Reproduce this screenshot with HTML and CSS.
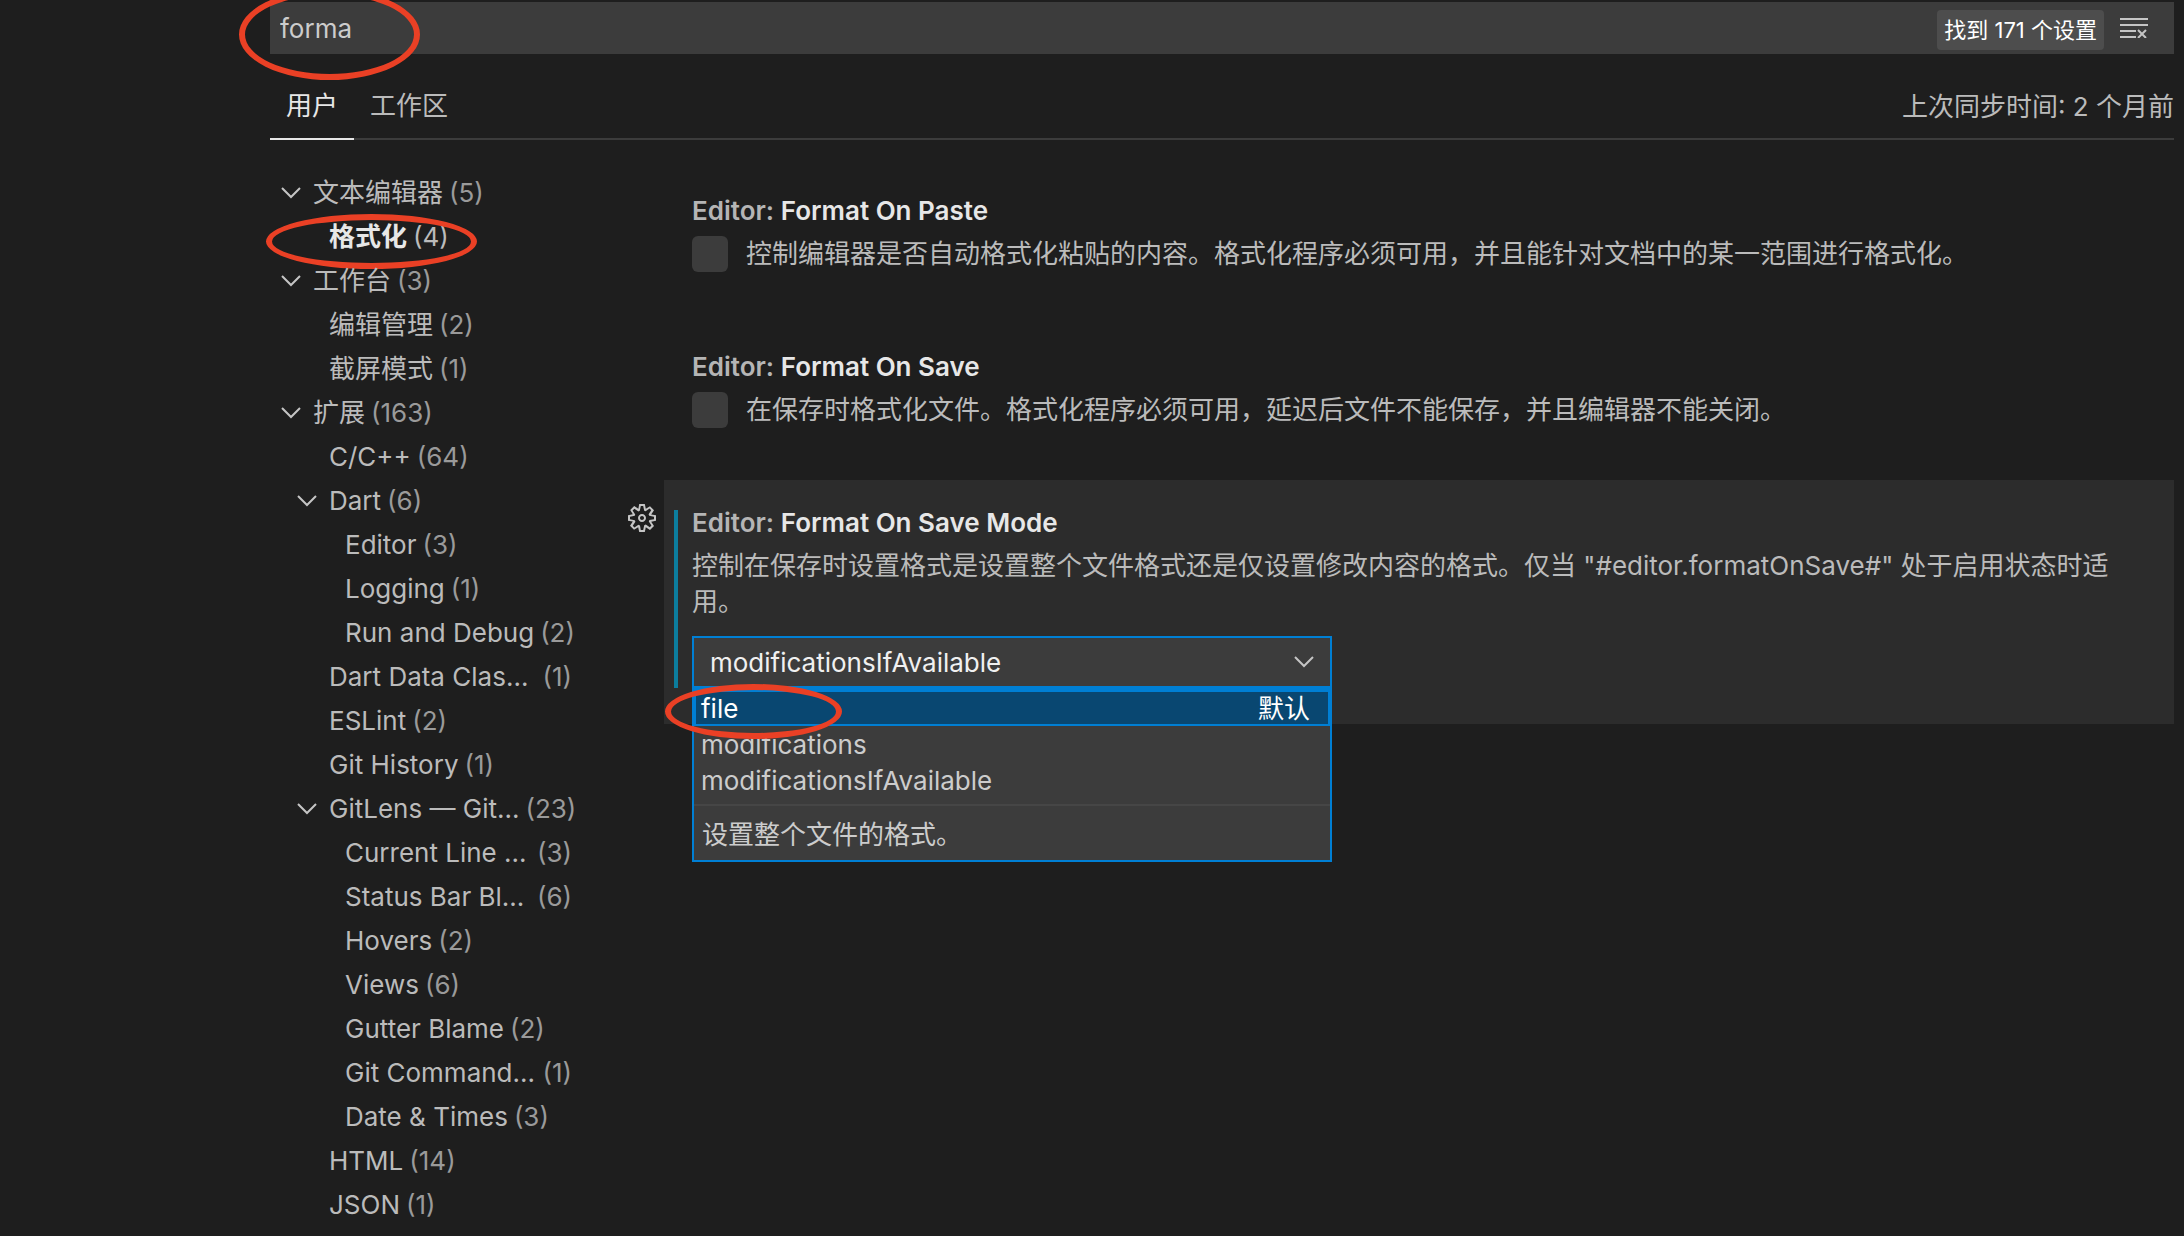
FILE: index.html
```html
<!DOCTYPE html>
<html lang="zh-CN">
<head>
<meta charset="utf-8">
<title>设置</title>
<link rel="stylesheet" href="styles.css">
</head>
<body>
<svg class="sprite" aria-hidden="true">
  <symbol id="chevron" viewBox="0 0 20 12"><path d="M1 1l9 9 9-9" fill="none" stroke="currentColor" stroke-width="2"/></symbol>
</svg>
<main class="settings">
  <header class="search">
    <input class="search-input" type="text" value="forma" aria-label="搜索设置">
    <span class="badge">找到 171 个设置</span>
    <button class="clear" type="button" aria-label="清除搜索">
      <svg viewBox="0 0 28 20" width="28" height="20" fill="none" stroke="currentColor" stroke-width="2"><path d="M0 1h28M0 7h28M0 13h16M0 19h16M18 12l8 8M26 12l-8 8"/></svg>
    </button>
    <span class="mark mark-search"></span>
  </header>
  <nav class="tabs">
    <button class="tab active" type="button">用户</button>
    <button class="tab" type="button">工作区</button>
    <span class="sync">上次同步时间: 2 个月前</span>
  </nav>
  <div class="body">
    <ul class="tree">
      <li class="row"><svg class="chev"><use href="#chevron"/></svg><span>文本编辑器</span><span class="count">(5)</span></li>
      <li class="row l2 selected"><span>格式化</span><span class="count">(4)</span><span class="mark mark-tree"></span></li>
      <li class="row"><svg class="chev"><use href="#chevron"/></svg><span>工作台</span><span class="count">(3)</span></li>
      <li class="row l2"><span>编辑管理</span><span class="count">(2)</span></li>
      <li class="row l2"><span>截屏模式</span><span class="count">(1)</span></li>
      <li class="row"><svg class="chev"><use href="#chevron"/></svg><span>扩展</span><span class="count">(163)</span></li>
      <li class="row l2"><span>C/C++</span><span class="count">(64)</span></li>
      <li class="row l2"><svg class="chev"><use href="#chevron"/></svg><span>Dart</span><span class="count">(6)</span></li>
      <li class="row l3"><span>Editor</span><span class="count">(3)</span></li>
      <li class="row l3"><span>Logging</span><span class="count">(1)</span></li>
      <li class="row l3"><span>Run and Debug</span><span class="count">(2)</span></li>
      <li class="row l2 cut"><span>Dart Data Clas...</span><span class="count">(1)</span></li>
      <li class="row l2"><span>ESLint</span><span class="count">(2)</span></li>
      <li class="row l2"><span>Git History</span><span class="count">(1)</span></li>
      <li class="row l2 cut"><svg class="chev"><use href="#chevron"/></svg><span>GitLens — Git...</span><span class="count">(23)</span></li>
      <li class="row l3 cut"><span>Current Line ...</span><span class="count">(3)</span></li>
      <li class="row l3 cut"><span>Status Bar Bl...</span><span class="count">(6)</span></li>
      <li class="row l3"><span>Hovers</span><span class="count">(2)</span></li>
      <li class="row l3"><span>Views</span><span class="count">(6)</span></li>
      <li class="row l3"><span>Gutter Blame</span><span class="count">(2)</span></li>
      <li class="row l3 cut"><span>Git Command...</span><span class="count">(1)</span></li>
      <li class="row l3"><span>Date &amp; Times</span><span class="count">(3)</span></li>
      <li class="row l2"><span>HTML</span><span class="count">(14)</span></li>
      <li class="row l2"><span>JSON</span><span class="count">(1)</span></li>
    </ul>
    <div class="list">
      <section class="item">
        <h2 class="title"><span class="category">Editor: </span>Format On Paste</h2>
        <div class="check-row">
          <input class="check" type="checkbox" id="paste">
          <label for="paste">控制编辑器是否自动格式化粘贴的内容。格式化程序必须可用，并且能针对文档中的某一范围进行格式化。</label>
        </div>
      </section>
      <section class="item">
        <h2 class="title"><span class="category">Editor: </span>Format On Save</h2>
        <div class="check-row">
          <input class="check" type="checkbox" id="save">
          <label for="save">在保存时格式化文件。格式化程序必须可用，延迟后文件不能保存，并且编辑器不能关闭。</label>
        </div>
      </section>
      <section class="item focused">
        <button class="gear" type="button" aria-label="更多操作">
          <svg viewBox="1 1 14 14" width="28" height="28" fill="currentColor" fill-rule="evenodd"><path d="M9.1 4.400L8.600 2H7.400l-.5 2.400-.7.3-2-1.300-.9.800 1.300 2-.2.700-2.400.5v1.200l2.400.5.3.8-1.300 2 .8.8 2-1.300.8.3.4 2.300h1.200l.5-2.400.8-.3 2 1.300.8-.8-1.300-2 .3-.8 2.300-.4V7.400l-2.400-.5-.3-.8 1.300-2-.8-.8-2 1.300-.7-.2zM9.400 1l.5 2.400L12 2.100l2 2-1.400 2.100 2.400.4v2.800l-2.400.5L14 12l-2 2-2.100-1.400-.5 2.400H6.600l-.5-2.400L4 13.900l-2-2 1.400-2.100L1 9.400V6.600l2.400-.5L2.100 4l2-2 2.100 1.400.4-2.400h2.800zm.6 7c0 1.100-.9 2-2 2s-2-.9-2-2 .9-2 2-2 2 .9 2 2zM8 9c.6 0 1-.4 1-1s-.4-1-1-1-1 .4-1 1 .4 1 1 1z"/></svg>
        </button>
        <h2 class="title"><span class="category">Editor: </span>Format On Save Mode</h2>
        <label class="desc" for="mode">控制在保存时设置格式是设置整个文件格式还是仅设置修改内容的格式。仅当 "#editor.formatOnSave#" 处于启用状态时适用。</label>
        <div class="dropdown">
          <select class="select" id="mode">
            <option>modificationsIfAvailable</option>
            <option>modifications</option>
            <option>file</option>
          </select>
          <svg class="chev select-chev"><use href="#chevron"/></svg>
          <div class="popup">
            <ul class="options" role="listbox" aria-label="Format On Save Mode">
              <li class="option current" role="option" aria-selected="true"><span>file</span><span>默认</span></li>
              <li class="option" role="option">modifications</li>
              <li class="option" role="option">modificationsIfAvailable</li>
            </ul>
            <p class="detail">设置整个文件的格式。</p>
            <span class="mark mark-option"></span>
          </div>
        </div>
      </section>
    </div>
  </div>
</main>
</body>
</html>
```
FILE: styles.css
```css
* { box-sizing: border-box; }

body {
  margin: 0;
  background: #1e1e1e;
  color: #bbbbbb;
  font: 26px/36px Inter, "Noto Sans CJK SC", sans-serif;
}

ul, h2, p { margin: 0; padding: 0; list-style: none; }
button, input, select { font: inherit; color: inherit; }
button { background: none; border: 0; padding: 0; }

.sprite { display: none; }

.settings { padding: 2px 10px 0 270px; }

/* search bar */
.search {
  position: relative;
  display: flex;
  align-items: center;
  height: 52px;
  padding-right: 26px;
  background: #3c3c3c;
}

.search-input {
  flex: 1;
  min-width: 0;
  padding: 2px 10px 0;
  border: 0;
  outline: 0;
  background: transparent;
  color: #cccccc;
}

.badge {
  height: 40px;
  padding: 0 7px;
  margin: 4px 16px 0 0;
  border-radius: 4px;
  background: #4d4d4d;
  color: #ffffff;
  font-size: 22px;
  line-height: 40px;
}

.clear { display: flex; color: #c5c5c5; }

/* scope tabs */
.tabs {
  display: flex;
  height: 86px;
  padding-top: 22px;
  border-bottom: 2px solid #3c3c3c;
}

.tab {
  height: 64px;
  padding: 0 16px 2px;
  border-bottom: 2px solid transparent;
}

.tab.active {
  color: #e7e7e7;
  border-bottom-color: #e7e7e7;
}

.sync { margin-left: auto; line-height: 62px; }

/* columns */
.body { display: flex; }

.tree {
  flex: none;
  width: 302px;
  padding-top: 31px;
}

.row {
  position: relative;
  display: flex;
  align-items: center;
  gap: 6px;
  height: 44px;
  padding-left: 43px;
  white-space: nowrap;
}

.l2 { padding-left: 59px; }
.l3 { padding-left: 75px; }
.cut .count { margin-left: auto; }
.count { color: #9a9a9a; }
.selected { color: #e7e7e7; font-weight: 700; }
.selected .count { color: #bbbbbb; font-weight: 400; }

.chev {
  flex: none;
  width: 20px;
  height: 12px;
  margin: 0 6px 0 -32px;
  color: #c5c5c5;
}

/* settings list */
.list {
  flex: 1;
  min-width: 0;
  margin-left: 92px;
  padding-top: 28px;
}

.item {
  position: relative;
  padding: 30px 28px 52px;
}

.title {
  margin-bottom: 12px;
  color: #e7e7e7;
  font-size: 26px;
  line-height: 26px;
  font-weight: 600;
}

.category { color: #b5b5b5; }

.check-row { display: flex; gap: 18px; }

.check {
  flex: none;
  appearance: none;
  width: 36px;
  height: 36px;
  margin: 0;
  border-radius: 6px;
  background: #3c3c3c;
}

.focused {
  padding-bottom: 36px;
  background: #2c2c2c;
}

.focused::before {
  content: "";
  position: absolute;
  left: 10px;
  top: 30px;
  bottom: 36px;
  width: 4px;
  background: #0c7d9d;
}

.gear {
  position: absolute;
  left: -36px;
  top: 24px;
  display: flex;
  color: #c5c5c5;
}

.desc {
  display: block;
  margin-bottom: 16px;
}

.dropdown {
  position: relative;
  width: 640px;
}

.select {
  display: block;
  appearance: none;
  width: 100%;
  height: 52px;
  padding: 2px 16px 0;
  border: 2px solid #007fd4;
  border-radius: 0;
  outline: 0;
  background: #3c3c3c;
  color: #f0f0f0;
}

.select-chev {
  position: absolute;
  right: 18px;
  top: 20px;
  margin: 0;
}

.popup {
  position: absolute;
  z-index: 1;
  top: 52px;
  left: 0;
  width: 100%;
  border: 2px solid #007fd4;
  background: #3c3c3c;
  color: #cccccc;
}

.options {
  padding-bottom: 6px;
  border-bottom: 2px solid #464646;
}

.option {
  display: flex;
  justify-content: space-between;
  height: 36px;
  padding: 0 20px 0 7px;
  line-height: 38px;
}

.option.current {
  outline: 2px solid #007fd4;
  outline-offset: -2px;
  background: #094771;
  color: #ffffff;
}

.detail { padding: 11px 8px 7px; }

/* hand-drawn highlights */
.mark {
  position: absolute;
  border: 6px solid #ea4025;
  border-radius: 50%;
}

.mark-search { left: -31px; top: -13px; width: 181px; height: 91px; }
.mark-tree { left: -4px; top: -1px; width: 211px; height: 55px; }
.mark-option { left: -29px; top: -6px; width: 177px; height: 55px; }
```
